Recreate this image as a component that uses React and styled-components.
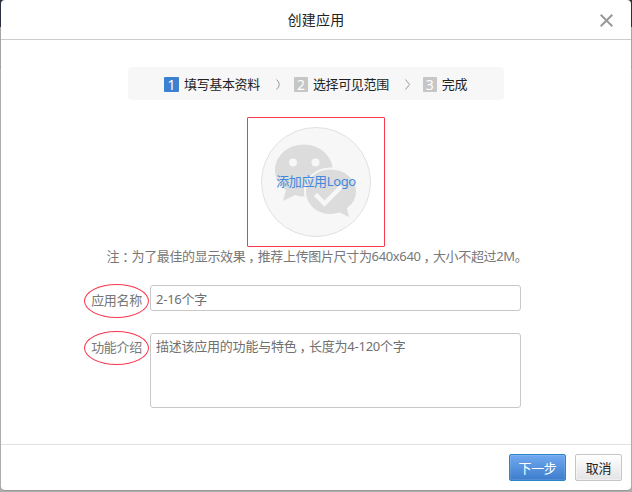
import React from 'react';
import styled, { createGlobalStyle } from 'styled-components';

const GlobalStyle = createGlobalStyle`
  * { box-sizing: border-box; }
  body {
    margin: 0;
    font-family: "Noto Sans", "Noto Sans CJK SC", sans-serif;
    font-size: 13px;
    letter-spacing: -0.35px;
    color: #222;
  }
  input, textarea, button { font: inherit; letter-spacing: inherit; }
`;

const Backdrop = styled.div`
  width: 632px;
  height: 492px;
  padding: 0 1px 2px;
  overflow: hidden;
  background: linear-gradient(#2b3040 0 27px, #a6a6a6 27px 67px, #929292 67px 68px, #adadad 68px);
`;

const Dialog = styled.section`
  display: flex;
  flex-direction: column;
  height: 490px;
  background: #fff;
  border-radius: 4px;
  box-shadow: 0 1px 0 #999;
`;

const Header = styled.header`
  display: grid;
  grid-template-columns: 48px 1fr 48px;
  align-items: center;
  height: 40px;
  border-bottom: 1px solid #ccc;
`;

const Title = styled.h1`
  grid-column: 2;
  margin: 0;
  text-align: center;
  font-size: 14px;
  font-weight: 400;
  line-height: 20px;
  letter-spacing: 0.2px;
`;

const CloseButton = styled.button`
  display: flex;
  justify-content: center;
  padding: 1px 2px 0 0;
  border: 0;
  background: none;
`;

const Body = styled.main`
  flex: 1;
  display: flex;
  flex-direction: column;
  padding: 27px 0 0;
`;

const Steps = styled.ol`
  display: flex;
  align-items: center;
  width: 376px;
  height: 33px;
  margin: 0 0 0 127px;
  padding: 0 0 0 36px;
  list-style: none;
  background: #f7f7f7;
  border-radius: 4px;
`;

const Step = styled.li`
  display: flex;
  align-items: center;
  white-space: nowrap;
  line-height: 20px;
`;

const StepNumber = styled.span`
  width: ${(p) => (p.$active ? 15 : 14)}px;
  height: 15px;
  margin: 1px 5px 0 0;
  border-radius: 1px;
  text-align: center;
  font-size: 14px;
  line-height: 15px;
  letter-spacing: 0;
  color: #fff;
  background: ${(p) => (p.$active ? '#3c80d2' : '#c6c6c6')};
`;

const Separator = styled.svg`
  flex: none;
  margin: 1px 13px 0 ${(p) => p.$gap}px;
`;

const LogoFrame = styled.div`
  display: grid;
  place-items: center;
  width: 138px;
  height: 130px;
  margin: 17px 0 0 246px;
  border: 1px solid #f9384e;
  border-radius: 1px;
`;

const LogoUpload = styled.button`
  display: grid;
  place-items: center;
  width: 110px;
  height: 110px;
  padding: 0;
  border: 1px solid #e1e1e1;
  border-radius: 50%;
  background: #f7f7f7;
  color: #4288dd;
  > * { grid-area: 1 / 1; }
`;

const LogoText = styled.span`
  padding-bottom: 2px;
  line-height: 20px;
  white-space: nowrap;
`;

const Hint = styled.p`
  margin: -1px 0 0 105.5px;
  line-height: 20px;
  white-space: nowrap;
  color: #777;
`;

const Mark = styled.span`
  display: inline-block;
  padding: 0 3.2px 0 3px;
  font-family: "Noto Sans CJK SC", sans-serif;
  font-feature-settings: "halt";
  line-height: 1;
`;

const Field = styled.div`
  display: flex;
  margin: ${(p) => p.$top}px 0 0 83px;
`;

const Label = styled.label`
  flex: none;
  width: 65px;
  height: 34px;
  margin: ${(p) => p.$offset}px 1px 0 0;
  border: 1px solid #f9384e;
  border-radius: 50%;
  text-align: center;
  line-height: 30px;
  color: #777;
`;

const Control = styled.div`
  width: 371px;
  height: ${(p) => p.$height}px;
  padding: ${(p) => p.$pad}px 5px;
  border: 1px solid #c8c8c8;
  border-radius: 3px;
  line-height: 20px;
  letter-spacing: -0.23px;
  color: #707070;
`;

const Footer = styled.footer`
  display: flex;
  justify-content: flex-end;
  gap: 9px;
  height: 46px;
  padding: 9px 9px 0 0;
  border-top: 1px solid #e1e1e1;
`;

const Button = styled.button`
  width: ${(p) => (p.$primary ? 57 : 47)}px;
  height: 27px;
  padding: 0;
  border: 1px solid ${(p) => (p.$primary ? '#2786c5' : '#c5c5c5')};
  border-radius: 2px;
  line-height: 24px;
  color: ${(p) => (p.$primary ? '#fff' : '#222')};
  background: ${(p) => (p.$primary
    ? 'linear-gradient(#70a9ef, #3d7dcd)'
    : 'linear-gradient(#fff, #e3e3e3)')};
  box-shadow: inset 0 0 0 1px ${(p) => (p.$primary ? 'rgba(255,255,255,.12)' : 'rgba(255,255,255,.4)')};
`;

const Chevron = ({ gap, curved }) => (
  <Separator $gap={gap} width="5" height="11" viewBox="0 0 5 11" fill="none" stroke="#999">
    <path d={curved ? 'M.5.5Q6 5.5.5 10.5' : 'M.5.5 4.5 5.5.5 10.5'} />
  </Separator>
);

const ChatBubbles = () => (
  <svg width="108" height="108" viewBox="0 0 108 108">
    <path fill="#dcdcdc" d="M42 16.500C26 16.500 13 28 13 42c0 8 4 15 11 20l-3 11 12-6c3 1 6 1.500 9 1.500 16 0 29-11 29-25.500S58 16.500 42 16.500Z" />
    <circle cx="31" cy="34.500" r="4" fill="#f7f7f7" />
    <circle cx="53.500" cy="34.500" r="4" fill="#f7f7f7" />
    <path
      fill="#dcdcdc"
      stroke="#f7f7f7"
      strokeWidth="2"
      d="M68.500 40.500C54 40.500 43 50.500 43 63.500S54 87 68.500 87c3.500 0 6-.5 9-1.500L88.500 91 86 80.500c5.500-4 9-10 9-17 0-13-12-23-26.500-23Z"
    />
    <path fill="none" stroke="#f7f7f7" strokeWidth="4.500" d="m53.500 66.500 9 9 17-17" />
  </svg>
);

export default function App() {
  return (
    <>
      <GlobalStyle />
      <Backdrop>
        <Dialog>
          <Header>
            <Title>创建应用</Title>
            <CloseButton aria-label="关闭">
              <svg width="13" height="13" viewBox="0 0 13 13" stroke="#999" strokeWidth="2">
                <path d="m.7.7 11.600 11.600m0-11.600L.7 12.300" />
              </svg>
            </CloseButton>
          </Header>
          <Body>
            <Steps>
              <Step><StepNumber $active>1</StepNumber>填写基本资料</Step>
              <Chevron gap={16} curved />
              <Step><StepNumber>2</StepNumber>选择可见范围</Step>
              <Chevron gap={16} />
              <Step><StepNumber>3</StepNumber>完成</Step>
            </Steps>
            <LogoFrame>
              <LogoUpload>
                <ChatBubbles />
                <LogoText>添加应用Logo</LogoText>
              </LogoUpload>
            </LogoFrame>
            <Hint>
              注<Mark>：</Mark>为了最佳的显示效果<Mark>，</Mark>推荐上传图片尺寸为640x640<Mark>，</Mark>大小不超过2M。
            </Hint>
            <Field $top={19}>
              <Label $offset={-1}>应用名称</Label>
              <Control $height={26} $pad={3}>2-16个字</Control>
            </Field>
            <Field $top={15}>
              <Label $offset={-2}>功能介绍</Label>
              <Control $height={75} $pad={2}>描述该应用的功能与特色<Mark>，</Mark>长度为4-120个字</Control>
            </Field>
          </Body>
          <Footer>
            <Button $primary>下一步</Button>
            <Button>取消</Button>
          </Footer>
        </Dialog>
      </Backdrop>
    </>
  );
}
